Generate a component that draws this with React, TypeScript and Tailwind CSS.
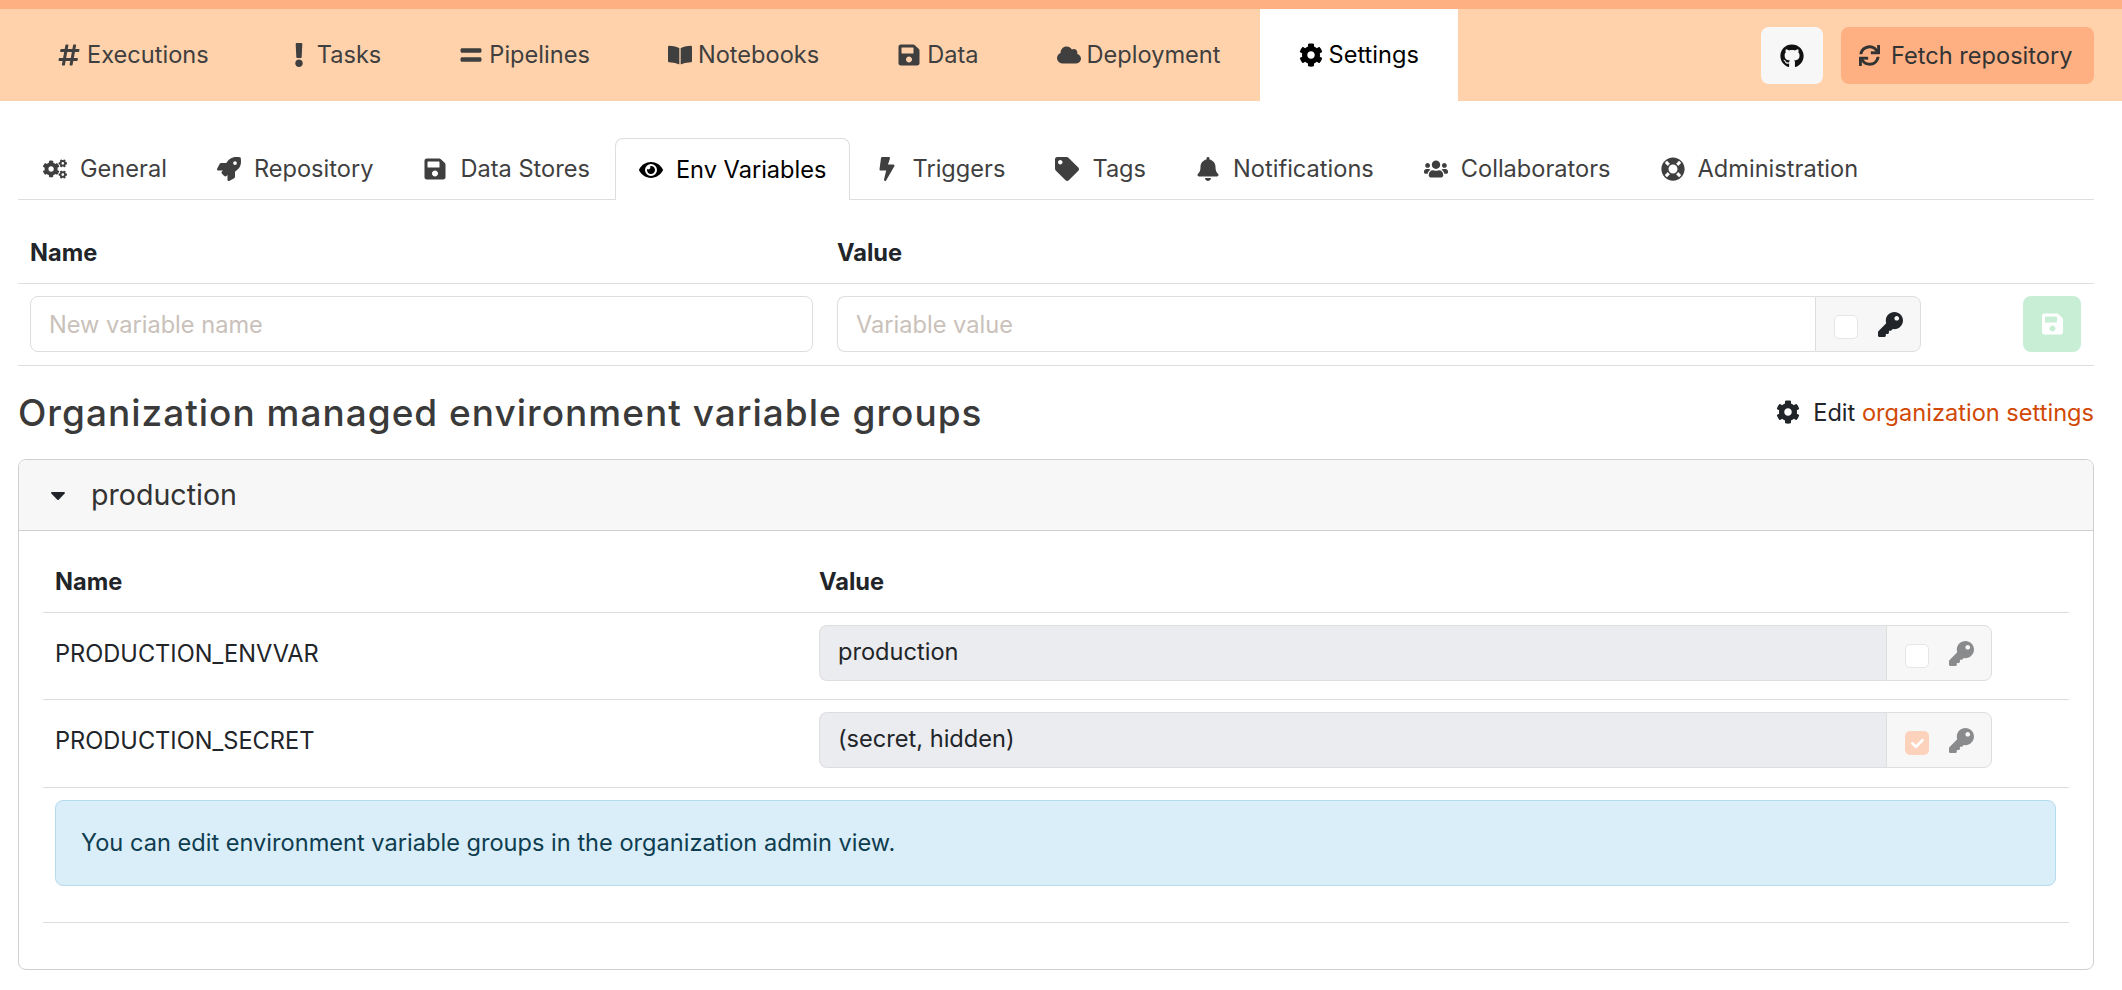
import type { ComponentType, ReactNode } from 'react';
import {
    FaBell,
    FaBolt,
    FaBookOpen,
    FaCaretDown,
    FaCheck,
    FaCloud,
    FaCog,
    FaCogs,
    FaEquals,
    FaExclamation,
    FaEye,
    FaGithub,
    FaHashtag,
    FaKey,
    FaLifeRing,
    FaRocket,
    FaSave,
    FaSync,
    FaTag,
    FaUsers,
} from 'react-icons/fa';

type NavItem = { label: string; icon: ComponentType<{ className?: string }>; active?: boolean };

const MAIN_NAV: NavItem[] = [
    { label: 'Executions', icon: FaHashtag },
    { label: 'Tasks', icon: FaExclamation },
    { label: 'Pipelines', icon: FaEquals },
    { label: 'Notebooks', icon: FaBookOpen },
    { label: 'Data', icon: FaSave },
    { label: 'Deployment', icon: FaCloud },
    { label: 'Settings', icon: FaCog, active: true },
];

const SETTINGS_TABS: NavItem[] = [
    { label: 'General', icon: FaCogs },
    { label: 'Repository', icon: FaRocket },
    { label: 'Data Stores', icon: FaSave },
    { label: 'Env Variables', icon: FaEye, active: true },
    { label: 'Triggers', icon: FaBolt },
    { label: 'Tags', icon: FaTag },
    { label: 'Notifications', icon: FaBell },
    { label: 'Collaborators', icon: FaUsers },
    { label: 'Administration', icon: FaLifeRing },
];

function TopBar() {
    return (
        <div className="flex h-[101px] items-stretch justify-between border-t-[9px] border-[#ffb083] bg-[#ffd2ab] pl-[18px] pr-[28px]">
            <nav className="flex">
                {MAIN_NAV.map(({ label, icon: Icon, active }) => (
                    <div
                        key={label}
                        className={
                            active
                                ? 'flex items-center gap-[6px] bg-white px-[39px] text-black'
                                : 'flex items-center gap-[6px] px-[39px] text-[#3f3f3f]'
                        }
                    >
                        <Icon className="h-[24px] w-auto" />
                        <span>{label}</span>
                    </div>
                ))}
            </nav>
            <div className="flex items-start gap-[18px] pt-[18px]">
                <div className="flex h-[57px] w-[62px] items-center justify-center rounded-[8px] bg-[#f7f7f7] text-[#111]">
                    <FaGithub className="h-[24px] w-[24px]" />
                </div>
                <div className="flex h-[57px] w-[253px] items-center gap-[11px] rounded-[8px] bg-[#ffb083] pl-[18px] text-[#333]">
                    <FaSync className="h-[21px] w-[21px]" />
                    <span>Fetch repository</span>
                </div>
            </div>
        </div>
    );
}

function SettingsTabs() {
    return (
        <div className="flex h-[99px] items-end border-b border-[#dedede] pt-[37px]">
            {SETTINGS_TABS.map(({ label, icon: Icon, active }) => (
                <div
                    key={label}
                    className={
                        active
                            ? '-mb-px flex h-[62px] items-center gap-[13px] rounded-t-[8px] border border-b-0 border-[#dedede] bg-white px-[23px] text-black'
                            : 'flex h-[60px] items-center gap-[13px] px-[25px] text-[#3f3f3f]'
                    }
                >
                    <Icon className="h-[24px] w-auto" />
                    <span>{label}</span>
                </div>
            ))}
        </div>
    );
}

function Addon({ checked, disabled }: { checked?: boolean; disabled?: boolean }) {
    return (
        <div className="flex w-[106px] shrink-0 items-center gap-[20px] rounded-r-[8px] border border-[#dedede] bg-[#f7f7f7] pl-[18px]">
            <span
                className={
                    checked
                        ? 'mt-[6px] flex h-[24px] w-[24px] items-center justify-center rounded-[5px] bg-[#fcd2bd] text-white'
                        : 'mt-[6px] h-[24px] w-[24px] rounded-[5px] border border-[#e6e6e6] bg-white'
                }
            >
                {checked && <FaCheck className="h-[13px] w-[13px]" />}
            </span>
            <FaKey className={disabled ? 'h-[25px] w-[25px] text-[#8a8b8d]' : 'h-[25px] w-[25px] text-[#212529]'} />
        </div>
    );
}

function ReadonlyRow({ name, value, checked, height }: { name: string; value: string; checked?: boolean; height: string }) {
    return (
        <div className={`${height} flex items-start border-b border-[#dedede] pl-[12px] pt-[12px]`}>
            <div className="w-[764px] shrink-0 pt-[14px] leading-[30px] text-[#212529]">{name}</div>
            <div className="flex h-[56px] w-[1173px] shrink-0">
                <input
                    readOnly
                    value={value}
                    className="h-full min-w-0 flex-1 rounded-l-[8px] border border-r-0 border-[#dedede] bg-[#ebecef] pb-[3px] pl-[18px] text-[#212529] outline-none"
                />
                <Addon checked={checked} disabled />
            </div>
        </div>
    );
}

function HeaderCell({ children, className }: { children: ReactNode; className: string }) {
    return <div className={`${className} shrink-0 font-bold text-[#212529]`}>{children}</div>;
}

export default function App() {
    return (
        <div className="min-h-[990px] bg-white font-['Inter',sans-serif] text-[23.6px]">
            <TopBar />
            <div className="pl-[18px] pr-[28px]">
                <SettingsTabs />

                <div className="flex h-[84px] items-center border-b border-[#dedede] pl-[12px] pt-[22px]">
                    <HeaderCell className="w-[807px]">Name</HeaderCell>
                    <HeaderCell className="w-[100px]">Value</HeaderCell>
                </div>
                <div className="flex h-[82px] items-start border-b border-[#dedede] pl-[12px] pt-[12px]">
                    <input
                        placeholder="New variable name"
                        className="h-[56px] w-[783px] shrink-0 rounded-[8px] border border-[#dedede] bg-white pl-[18px] outline-none placeholder:text-[#c9c1ba]"
                    />
                    <div className="ml-[24px] flex h-[56px] w-[1084px] shrink-0">
                        <input
                            placeholder="Variable value"
                            className="h-full min-w-0 flex-1 rounded-l-[8px] border border-r-0 border-[#dedede] bg-white pl-[18px] outline-none placeholder:text-[#c9c1ba]"
                        />
                        <Addon />
                    </div>
                    <div className="ml-[102px] flex h-[56px] w-[58px] shrink-0 items-center justify-center rounded-[8px] bg-[#c8eed6] text-white">
                        <FaSave className="h-[24px] w-[21px]" />
                    </div>
                </div>

                <div className="flex h-[93px] items-center justify-between">
                    <h2 className="text-[37px] font-medium leading-none tracking-[1px] text-[#3a3a3a]">
                        Organization managed environment variable groups
                    </h2>
                    <div className="flex items-center text-[#212529]">
                        <FaCog className="mr-[13px] h-[24px] w-[24px]" />
                        <span>
                            Edit <span className="text-[#d14905]">organization settings</span>
                        </span>
                    </div>
                </div>

                <div className="h-[511px] rounded-[8px] border border-[#d0d0d0]">
                    <div className="flex h-[71px] items-center rounded-t-[7px] border-b border-[#d0d0d0] bg-[#f7f7f7] pl-[31px] text-[28.6px] text-[#333]">
                        <FaCaretDown className="mr-[25px] h-[24px] w-[16px] text-[#212529]" />
                        <span>production</span>
                    </div>
                    <div className="px-[24px]">
                        <div className="flex h-[82px] items-center border-b border-[#dedede] pl-[12px] pt-[21px]">
                            <HeaderCell className="w-[764px]">Name</HeaderCell>
                            <HeaderCell className="w-[100px]">Value</HeaderCell>
                        </div>
                        <ReadonlyRow name="PRODUCTION_ENVVAR" value="production" height="h-[87px]" />
                        <ReadonlyRow name="PRODUCTION_SECRET" value="(secret, hidden)" checked height="h-[88px]" />
                        <div className="border-b border-[#dedede] pb-[36px] pl-[12px] pr-[13px] pt-[12px]">
                            <div className="flex h-[86px] items-center rounded-[8px] border border-[#b6dbeb] bg-[#d9eef8] pl-[25px] text-[#0f3d50]">
                                You can edit environment variable groups in the organization admin view.
                            </div>
                        </div>
                    </div>
                </div>
            </div>
        </div>
    );
}
